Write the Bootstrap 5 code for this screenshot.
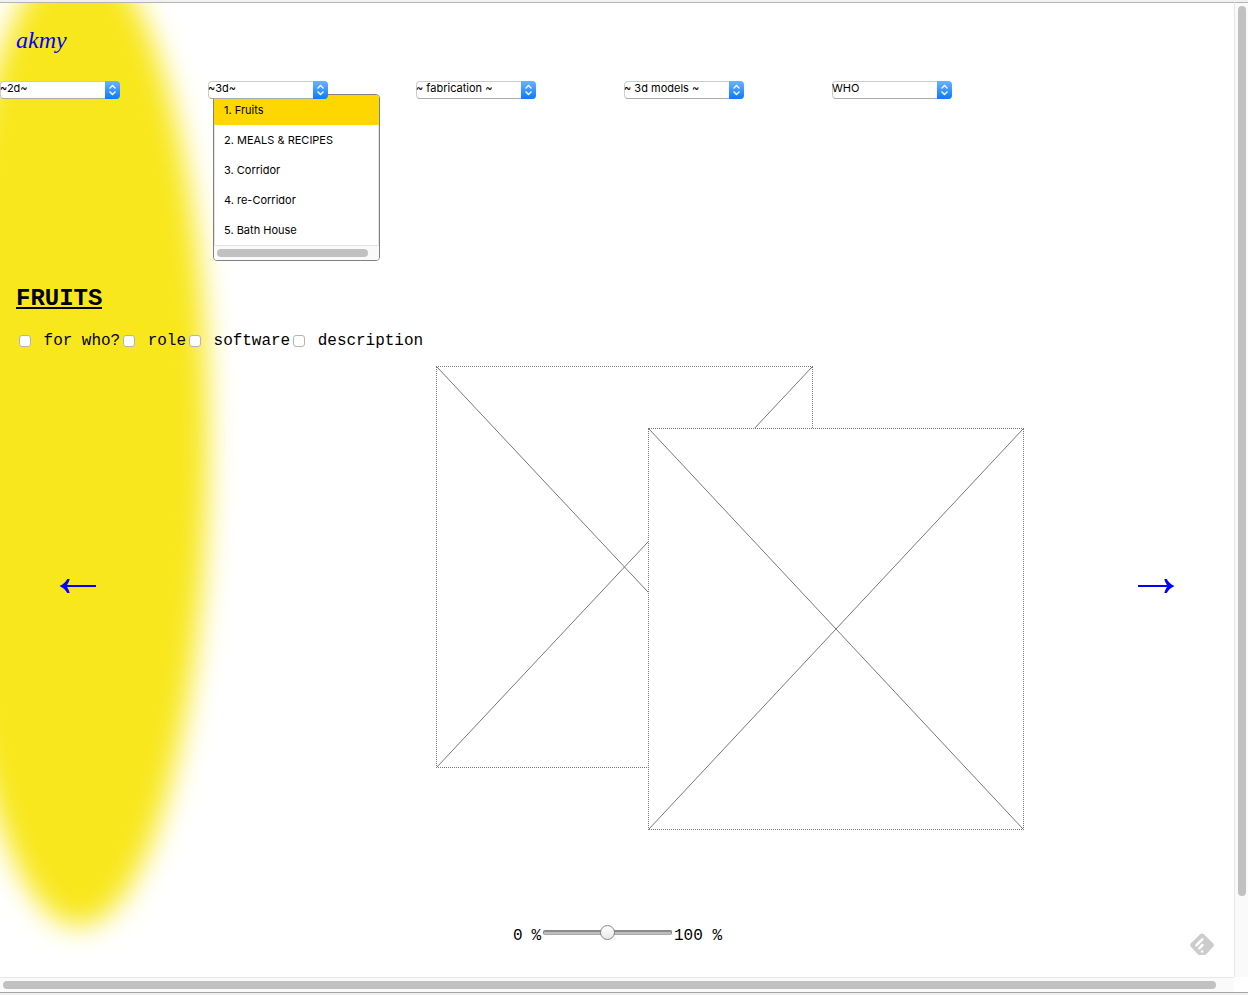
<!DOCTYPE html>
<html lang="en">
<head>
<meta charset="utf-8">
<meta name="viewport" content="width=device-width, initial-scale=1">
<title>akmy</title>
<link href="https://cdn.jsdelivr.net/npm/bootstrap@5.3.0/dist/css/bootstrap.min.css" rel="stylesheet">
<style>
html,body{height:100%;overflow:hidden}
body{color:#000;font:16px/18px "Liberation Mono","Courier New",monospace}
.shell{height:995px;border-top:2px solid #f1f1f1}
.page{border-top:1px solid #b4b4b4;height:975px}
.glow{left:-50px;top:-49px;width:258px;height:972px;border-radius:50%;background:#f8e71c;filter:blur(14px)}
.brand{font:italic 24px/28px "Liberation Serif","Times New Roman",serif;color:#00f;padding:23px 0 0 16px;height:78px}
.menus{font:11px/12px Inter,sans-serif;height:200px}
.menu-col{width:208px}
.picker{width:120px;height:18px;border:1px solid #ccc;border-bottom-color:#aaa;border-radius:4px;background:#fff;z-index:2}
.picker span{white-space:pre;margin-left:-1px}
.knob{width:15px;height:18px;margin:-1px -1px 0 0;background:linear-gradient(#6cb3fa,#0a7bff);border-radius:0 4px 4px 0}
.drop{left:5px;top:13px;width:167px;height:167px;border:1px solid #808080;border-radius:4px;background:#fff;z-index:1}
.drop li{height:30px;line-height:30px;padding-left:9px;border-left:1px solid #e4e4e4;border-right:1px solid #e4e4e4}
.drop li.active{background:#ffd700;border-color:#ffd700}
.drop-scroll{height:15px;background:#fafafa;border-top:1px solid #e4e4e4;padding:3px}
.drop-scroll div{width:151px;height:8px;border-radius:4px;background:#c1c1c1}
h1.title{font:bold 24px/28px "Liberation Mono","Courier New",monospace;padding:4px 0 0 16px;height:51px;margin:0}
h1.title span{border-bottom:2px solid #000;display:inline-block;height:24px;line-height:28px}
.checks{padding-left:16px;height:34px;white-space:pre;letter-spacing:-.03px}
.tick{appearance:none;width:12px;height:12px;margin:0 3px;border:1px solid #b4b4b4;border-radius:3px;background:#fff;flex:none}
.gallery{height:464px}
.frame{border:1px dotted #777;background:#fff}
.frame svg{display:block;width:100%;height:100%}
.frame.back{left:436px;top:0;width:377px;height:402px}
.frame.front{left:648px;top:62px;width:376px;height:402px}
.arrow{width:38px;height:18px;margin-top:211px}
.arrow.prev{margin-left:59px}
.arrow.next{margin-right:59px}
.amount{margin:97px 0 0 513px;height:18px}
.amount span:first-child{width:29px;letter-spacing:-.3px}
.track{width:129px;height:5px;margin:0 2px 7px 1px;border-radius:2px;background:linear-gradient(#777,#bbb 50%,#c4c4c4);border:1px solid #888;border-bottom-color:#aaa}
.thumb{width:15px;height:15px;left:56px;top:-6px;border:1px solid #858585;border-radius:50%;background:linear-gradient(#fff,#e8e8e8)}
.badge-mark{right:20px;bottom:21px;width:24px;height:23px}
.vbar{width:14px;background:#fafafa;border-left:1px solid #e7e7e7;border-top:1px solid #b4b4b4;padding:3px 0 0 3px}
.vbar div{width:8px;height:890px;border-radius:4px;background:#c1c1c1}
.hbar{height:15px;width:1234px;background:#fafafa;border-top:1px solid #e7e7e7;padding:3px}
.hbar div{width:1213px;height:8px;border-radius:4px;background:#c1c1c1}
.edge{height:3px;background:#f2f2f2;border-top:1px solid #a3a3a3}
</style>
</head>
<body>
<div class="shell d-flex flex-column">
  <div class="d-flex">
    <main class="page flex-grow-1 position-relative overflow-hidden">
      <div class="glow position-absolute"></div>
      <div class="position-relative">
        <div class="brand">akmy</div>
        <nav class="menus d-flex">
          <div class="menu-col"><div class="picker d-flex justify-content-between position-relative"><span>~2d~</span><svg class="knob" viewBox="0 0 15 18" fill="none" stroke="#fff" stroke-width="1.3"><path d="M4.500 7.500l3-3 3 3M4.500 10.500l3 3 3-3"/></svg></div></div>
          <div class="menu-col position-relative"><div class="picker d-flex justify-content-between position-relative"><span>~3d~</span><svg class="knob" viewBox="0 0 15 18" fill="none" stroke="#fff" stroke-width="1.3"><path d="M4.500 7.500l3-3 3 3M4.500 10.500l3 3 3-3"/></svg></div>
            <div class="drop position-absolute overflow-hidden">
              <ul class="list-unstyled m-0">
                <li class="active">1. Fruits</li>
                <li>2. MEALS &amp; RECIPES</li>
                <li>3. Corridor</li>
                <li>4. re-Corridor</li>
                <li>5. Bath House</li>
              </ul>
              <div class="drop-scroll"><div></div></div>
            </div>
          </div>
          <div class="menu-col"><div class="picker d-flex justify-content-between position-relative"><span>~ fabrication ~</span><svg class="knob" viewBox="0 0 15 18" fill="none" stroke="#fff" stroke-width="1.3"><path d="M4.500 7.500l3-3 3 3M4.500 10.500l3 3 3-3"/></svg></div></div>
          <div class="menu-col"><div class="picker d-flex justify-content-between position-relative"><span>~ 3d models ~</span><svg class="knob" viewBox="0 0 15 18" fill="none" stroke="#fff" stroke-width="1.3"><path d="M4.500 7.500l3-3 3 3M4.500 10.500l3 3 3-3"/></svg></div></div>
          <div class="menu-col"><div class="picker d-flex justify-content-between position-relative"><span>WHO</span><svg class="knob" viewBox="0 0 15 18" fill="none" stroke="#fff" stroke-width="1.3"><path d="M4.500 7.500l3-3 3 3M4.500 10.500l3 3 3-3"/></svg></div></div>
        </nav>
        <h1 class="title"><span>FRUITS</span></h1>
        <div class="checks d-flex align-items-start"><label class="d-flex align-items-center"><input type="checkbox" class="tick"> for who?</label><label class="d-flex align-items-center"><input type="checkbox" class="tick"> role</label><label class="d-flex align-items-center"><input type="checkbox" class="tick"> software</label><label class="d-flex align-items-center"><input type="checkbox" class="tick"> description</label></div>
        <section class="gallery position-relative d-flex justify-content-between">
          <svg class="arrow prev" viewBox="0 0 38 18" fill="none" stroke="#00f" stroke-width="2"><path d="M4 9h33"/><path fill="#00f" stroke="none" d="M.5 9Q6 6.500 8.300 2h2.400Q10 5 8.300 7.500v3Q10 13 10.700 16H8.300Q6 11.500.5 9z"/></svg>
          <svg class="arrow next" viewBox="0 0 38 18" fill="none" stroke="#00f" stroke-width="2"><path d="M1 9h33"/><path fill="#00f" stroke="none" d="M37.500 9Q32 6.500 29.700 2h-2.400Q28 5 29.700 7.500v3Q28 13 27.300 16h2.400Q32 11.500 37.500 9z"/></svg>
          <div class="frame back position-absolute"><svg viewBox="0 0 375 400" stroke="#777"><path d="M0 0l375 400M375 0L0 400"/></svg></div>
          <div class="frame front position-absolute"><svg viewBox="0 0 374 400" stroke="#777"><path d="M0 0l374 400M374 0L0 400"/></svg></div>
        </section>
        <div class="amount d-flex align-items-center"><span>0 %</span><div class="track position-relative"><div class="thumb position-absolute"></div></div><span>100 %</span></div>
      </div>
      <svg class="badge-mark position-absolute" viewBox="0 0 24 23"><path fill="#ccc" d="M10.200 1.300Q12-.3 13.800 1.300l9.500 9.200q1.200 1.500 0 3L16.500 21Q15.500 22 14.300 22H9.700Q8.500 22 7.500 21L.7 13.500q-1.200-1.500 0-3z"/><path d="M6.300 12.300l6-6M9.200 15.300l3.300-3.300M12 18.500h.2" stroke="#fff" stroke-width="2.500" stroke-linecap="round"/></svg>
    </main>
    <div class="vbar"><div></div></div>
  </div>
  <div class="hbar"><div></div></div>
  <div class="edge mt-auto"></div>
</div>
<script src="https://cdn.jsdelivr.net/npm/bootstrap@5.3.0/dist/js/bootstrap.bundle.min.js"></script>
</body>
</html>
